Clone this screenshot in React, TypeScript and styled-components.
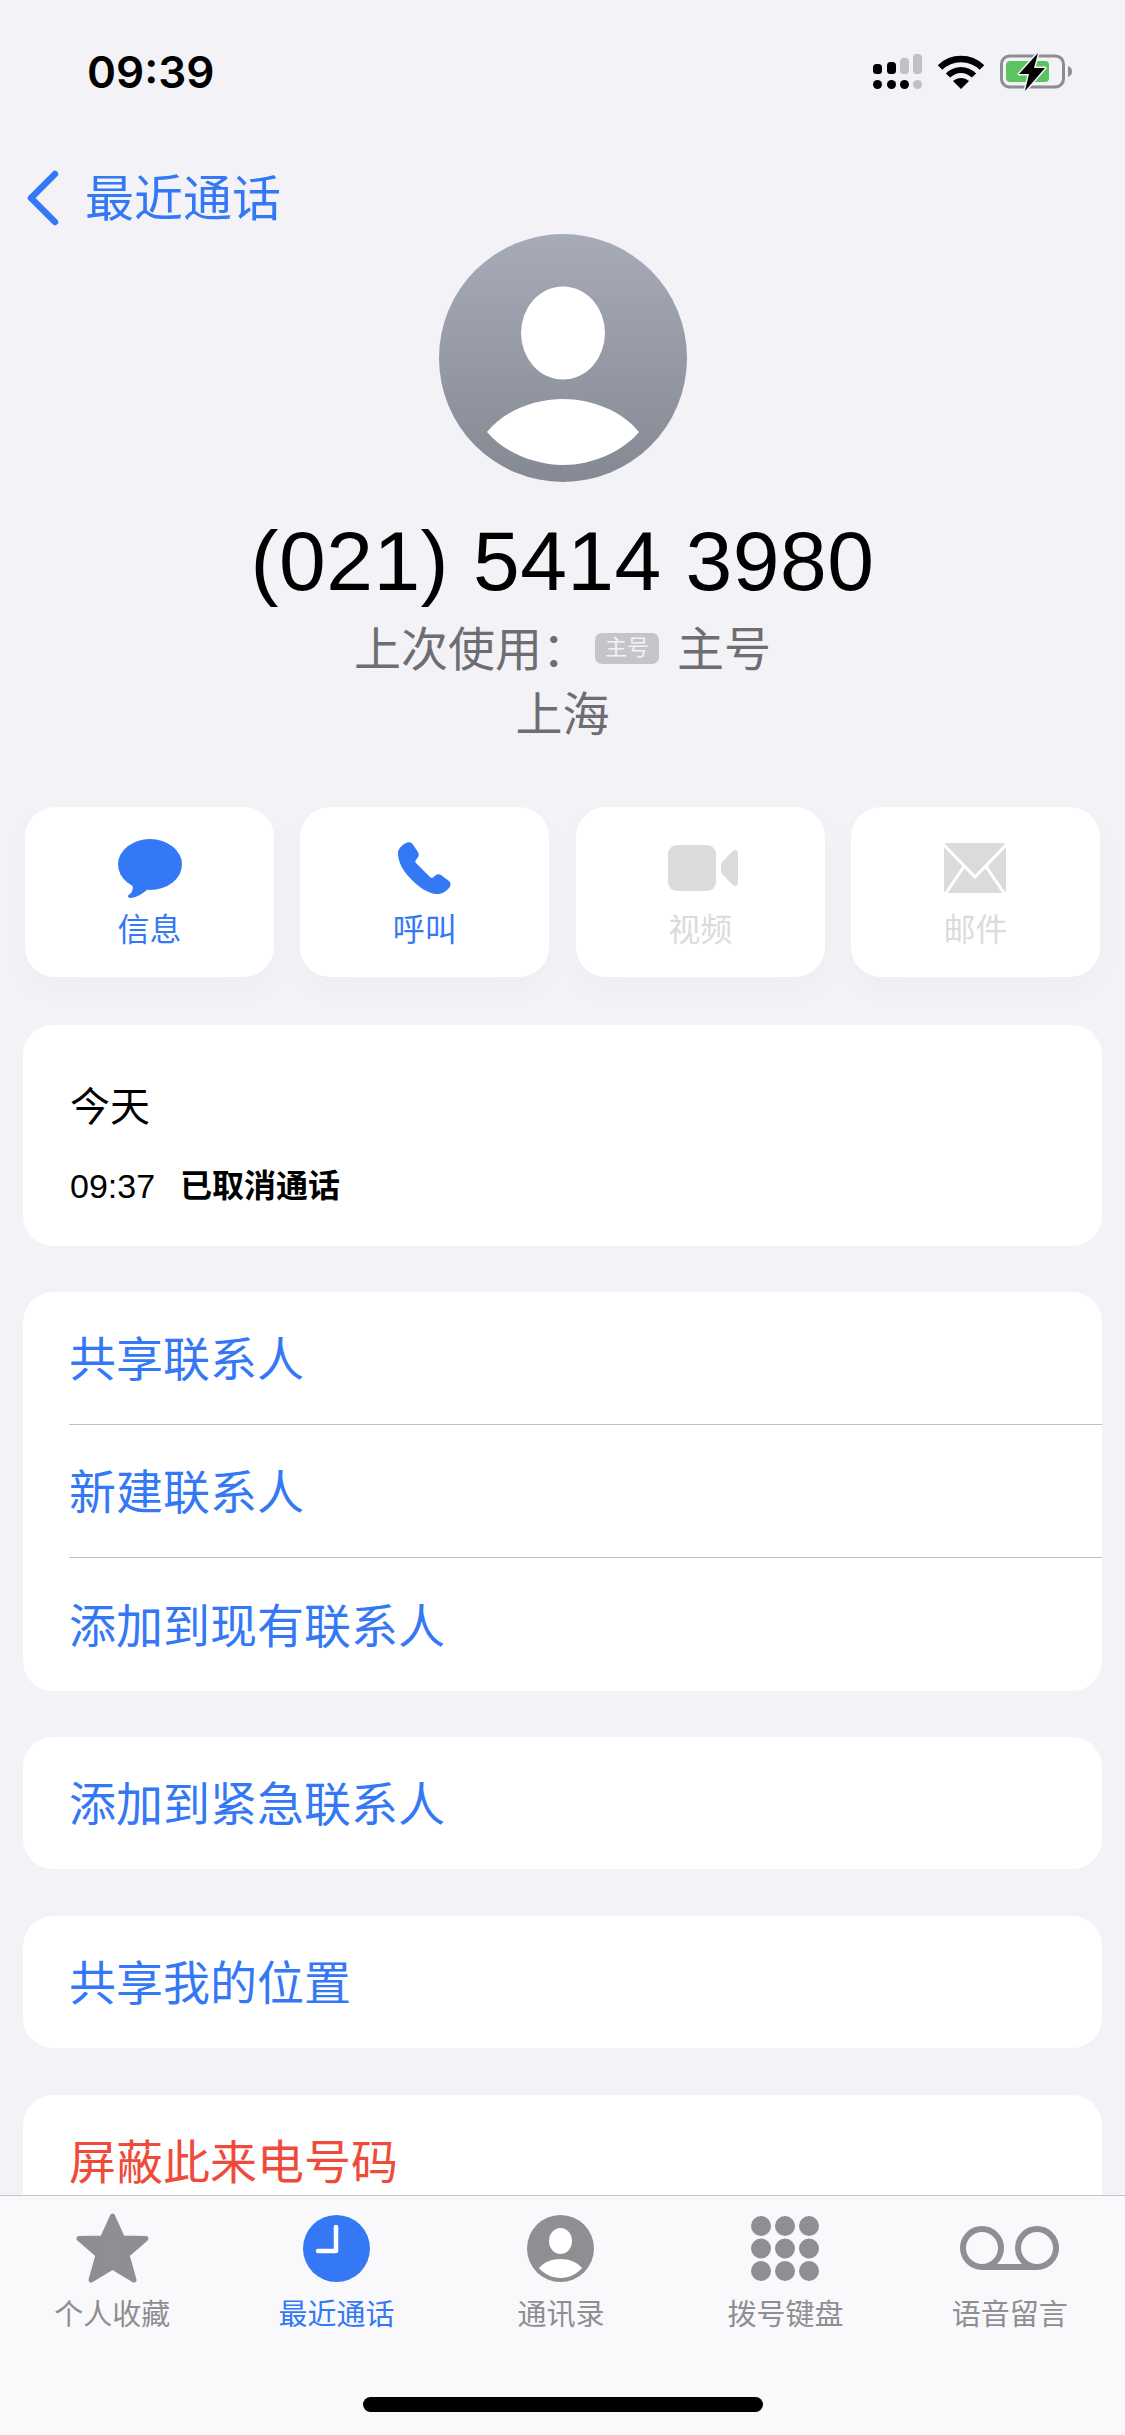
import React from "react";
import styled, { createGlobalStyle } from "styled-components";

const CJK = `"Liberation Sans", "Noto Sans CJK SC", sans-serif`;
const BLUE = "#3478f6";
const GREY = "#8e8e93";
const DISABLED = "#dbdbdd";

const GlobalStyle = createGlobalStyle`
  html, body {
    margin: 0;
    padding: 0;
    background: #f2f2f7;
  }
  * {
    box-sizing: border-box;
  }
`;

const Screen = styled.div`
  position: relative;
  width: 1125px;
  height: 2435px;
  overflow: hidden;
  background: #f2f2f7;
  font-family: ${CJK};
  color: #000;
`;

const StatusBar = styled.div`
  height: 143px;
  padding: 0 53px 0 87px;
  display: flex;
  align-items: center;
  justify-content: space-between;
`;

const Clock = styled.span`
  font-family: Inter, "Liberation Sans", sans-serif;
  font-size: 44px;
  font-weight: 600;
`;

const StatusIcons = styled.div`
  display: flex;
  align-items: center;
  gap: 16px;
`;

const Nav = styled.div`
  height: 91px;
  padding: 27px 0 0 27px;
  display: flex;
  align-items: flex-start;
  gap: 26px;
  color: ${BLUE};
  font-size: 49px;
  line-height: 59px;
`;

const Hero = styled.div`
  display: flex;
  flex-direction: column;
  align-items: center;
`;

const PhoneNumber = styled.div`
  margin-top: 31px;
  font-size: 84px;
  letter-spacing: 0.5px;
  line-height: 96px;
`;

const SubLine = styled.div`
  display: flex;
  align-items: center;
  height: 65px;
  padding-bottom: 7px;
  font-size: 47px;
  color: #6d6d72;
`;

const FirstSubLine = styled(SubLine)`
  margin-top: 7px;
`;

const Tag = styled.span`
  width: 64px;
  height: 31px;
  margin: 7px 18px 0 6px;
  border-radius: 7px;
  background: #c5c5c9;
  color: #f2f2f7;
  font-size: 22px;
  line-height: 30px;
  text-align: center;
`;

const Actions = styled.div`
  margin-top: 61px;
  padding: 0 25px;
  display: grid;
  grid-template-columns: repeat(4, 249px);
  justify-content: space-between;
`;

const Action = styled.div<{ $disabled?: boolean }>`
  height: 170px;
  border-radius: 30px;
  background: #fff;
  box-shadow: 0 12px 30px rgba(60, 60, 90, 0.025);
  padding-top: 30px;
  display: flex;
  flex-direction: column;
  align-items: center;
  color: ${({ $disabled }) => ($disabled ? DISABLED : BLUE)};
  font-size: 32px;
  line-height: 44px;
`;

const ActionIcon = styled.div`
  height: 62px;
  margin-bottom: 9px;
  display: flex;
  align-items: center;
  justify-content: center;
`;

const Card = styled.div<{ $gap?: number }>`
  margin: ${({ $gap }) => $gap ?? 46}px 23px 0;
  border-radius: 30px;
  background: #fff;
  overflow: hidden;
`;

const CallCard = styled(Card)`
  height: 221px;
  padding: 52px 47px 0;
`;

const CallDay = styled.div`
  font-size: 40px;
  line-height: 60px;
`;

const CallRow = styled.div`
  margin-top: 27px;
  display: flex;
  gap: 25px;
  font-size: 32px;
  line-height: 44px;
`;

const CallTime = styled.span`
  font-size: 34px;
`;

const CallStatus = styled.span`
  font-weight: 700;
`;

const Row = styled.div<{ $danger?: boolean }>`
  padding-left: 46px;
  color: ${({ $danger }) => ($danger ? "#f04b3a" : BLUE)};
  font-size: 47px;
`;

const RowLabel = styled.div`
  height: 133px;
  padding-bottom: 5px;
  display: flex;
  align-items: center;
  border-bottom: 1px solid #bfbfc2;

  ${Row}:last-child & {
    border-bottom: 0;
  }

  ${Row}:only-child & {
    height: 132px;
  }
`;

const TabBar = styled.div`
  position: absolute;
  left: 0;
  right: 0;
  top: 2195px;
  bottom: 0;
  border-top: 1.5px solid #c6c6c9;
  background: #f9f9fb;
  padding: 15px 3px 0 0;
  display: grid;
  grid-template-columns: repeat(5, 1fr);
  align-items: start;
`;

const Tab = styled.div<{ $active?: boolean }>`
  display: flex;
  flex-direction: column;
  align-items: center;
  color: ${({ $active }) => ($active ? BLUE : GREY)};
  font-size: 29px;
  line-height: 40px;
`;

const TabIcon = styled.div`
  height: 74px;
  margin-bottom: 10px;
  display: flex;
  align-items: center;
  justify-content: center;
`;

const HomeIndicator = styled.div`
  position: absolute;
  left: 363px;
  bottom: 23px;
  width: 400px;
  height: 15px;
  border-radius: 8px;
  background: #000;
`;

const SignalIcon = () => (
  <svg width="49" height="35" viewBox="0 0 49 35">
    <rect x="0" y="10" width="9" height="10" rx="3.5" fill="#000" />
    <rect x="14" y="8" width="9" height="12" rx="3.5" fill="#000" />
    <rect x="27" y="4" width="9" height="16" rx="3.5" fill="#c1c1c5" />
    <rect x="40" y="0" width="9" height="20" rx="3.5" fill="#c1c1c5" />
    <circle cx="4.5" cy="30.5" r="4.5" fill="#000" />
    <circle cx="18.5" cy="30.5" r="4.5" fill="#000" />
    <circle cx="31.5" cy="30.5" r="4.5" fill="#000" />
    <circle cx="44.5" cy="30.5" r="4.5" fill="#c1c1c5" />
  </svg>
);

const WifiIcon = () => (
  <svg width="46" height="34" viewBox="0 0 46 34" fill="none" stroke="#000">
    <path d="M2 12.5C13.5 1 32.5 1 44 12.5" strokeWidth="6.5" />
    <path d="M10 20.5C17.5 13 28.5 13 36 20.5" strokeWidth="6" />
    <path d="M15 26C20 22 26 22 31 26L23 34Z" fill="#000" stroke="none" />
  </svg>
);

const BatteryIcon = () => (
  <svg width="72" height="38" viewBox="0 0 72 38">
    <rect x="1.5" y="3" width="62" height="31" rx="8" fill="none" stroke="#8e8e92" strokeWidth="3" />
    <rect x="6" y="8" width="43" height="21" rx="4" fill="#5ac560" />
    <path d="M68 13C71 14 72 16 72 18.5C72 21 71 23 68 24Z" fill="#8e8e92" />
    <path
      d="M38 0L19 21H29L25 38L45 15H34Z"
      fill="#000"
      stroke="#f2f2f7"
      strokeWidth="3"
      paintOrder="stroke"
      strokeLinejoin="round"
    />
  </svg>
);

const BackChevron = () => (
  <svg width="32" height="56" viewBox="0 0 32 56" fill="none" stroke={BLUE} strokeWidth="6.5" strokeLinecap="round" strokeLinejoin="round">
    <path d="M28 4L4 28L28 52" />
  </svg>
);

const Avatar = () => (
  <svg width="248" height="248" viewBox="0 0 248 248">
    <defs>
      <linearGradient id="avatarFill" x1="0" y1="0" x2="0" y2="1">
        <stop offset="0" stopColor="#a7abb7" />
        <stop offset="1" stopColor="#858994" />
      </linearGradient>
    </defs>
    <circle cx="124" cy="124" r="124" fill="url(#avatarFill)" />
    <ellipse cx="124" cy="99" rx="42" ry="46.5" fill="#fff" />
    <path d="M48 198C65 177 95 165 124 165C153 165 183 177 200 198C183 218 153 231 124 231C95 231 65 218 48 198Z" fill="#fff" />
  </svg>
);

const MessageIcon = () => (
  <svg width="64" height="59" viewBox="0 0 64 59" fill={BLUE}>
    <ellipse cx="32" cy="25.5" rx="32" ry="25.5" />
    <path d="M14 44C16 50 14 54 10.5 56C9 58 11 59 13 59C19 58 24 55 29 51Z" />
  </svg>
);

const PhoneIcon = () => (
  <svg width="53" height="52" viewBox="0 0 53 52" fill={BLUE}>
    <path d="M8 1C10 -0.5 13 0 14.5 2L20 10C21 12 21 14 20 15L18 18C17 19 17 20 18 21L32 35C33 36 34 36 35 35.5L38 33C39 32 41 32 43 33L51 39C53 41 53 44 51 46C47 50 44 52 39 52C31 52 20 45 12 36C4 28 0 19 0 11C0 7 4 3 8 1Z" />
  </svg>
);

const VideoIcon = () => (
  <svg width="76" height="46" viewBox="-6 0 76 46" fill={DISABLED}>
    <rect x="0" y="0" width="48" height="46" rx="9" />
    <path d="M54 17L65 6C67 4 70 5 70 8V38C70 41 67 42 65 40L54 29C53 28 53 27 53 26V20C53 19 53 18 54 17Z" />
  </svg>
);

const MailIcon = () => (
  <svg width="62" height="50" viewBox="0 0 62 50">
    <rect x="0" y="0" width="62" height="50" rx="3" fill={DISABLED} />
    <path d="M0 2L31 34L62 2M2 50L21 22M60 50L41 22" fill="none" stroke="#fff" strokeWidth="3" />
  </svg>
);

const StarIcon = () => (
  <svg width="73" height="70" viewBox="0 0 73 70" fill={GREY} stroke={GREY} strokeWidth="5" strokeLinejoin="round">
    <path d="M36.5 3L46.5 25L70 25.5L51 42L58 67L36.5 54L15 67L22 42L3 25.5L26.5 25Z" />
  </svg>
);

const ClockIcon = () => (
  <svg width="67" height="67" viewBox="0 0 67 67">
    <circle cx="33.5" cy="33.5" r="33.5" fill={BLUE} />
    <path d="M33 12V36H15" fill="none" stroke="#fff" strokeWidth="4.5" strokeLinecap="round" strokeLinejoin="round" />
  </svg>
);

const ContactIcon = () => (
  <svg width="67" height="67" viewBox="0 0 67 67">
    <circle cx="33.5" cy="33.5" r="33.5" fill={GREY} />
    <ellipse cx="33.5" cy="26" rx="11.5" ry="13" fill="#fff" />
    <path d="M12 53C17 47 25 44 33.5 44C42 44 50 47 55 53C50 59 42 63 33.5 63C25 63 17 59 12 53Z" fill="#fff" />
  </svg>
);

const KeypadIcon = () => (
  <svg width="68" height="65" viewBox="0 0 68 65" fill={GREY}>
    {[10, 32.5, 55].map((cy) =>
      [10, 34, 58].map((cx) => <circle key={`${cx}-${cy}`} cx={cx} cy={cy} r="10" />)
    )}
  </svg>
);

const VoicemailIcon = () => (
  <svg width="99" height="44" viewBox="0 0 99 44" fill="none" stroke={GREY} strokeWidth="6">
    <circle cx="22" cy="22" r="19" />
    <circle cx="77" cy="22" r="19" />
    <path d="M22 41H77" />
  </svg>
);

const actions = [
  { label: "信息", icon: <MessageIcon /> },
  { label: "呼叫", icon: <PhoneIcon /> },
  { label: "视频", icon: <VideoIcon />, disabled: true },
  { label: "邮件", icon: <MailIcon />, disabled: true },
];

const tabs = [
  { label: "个人收藏", icon: <StarIcon /> },
  { label: "最近通话", icon: <ClockIcon />, active: true },
  { label: "通讯录", icon: <ContactIcon /> },
  { label: "拨号键盘", icon: <KeypadIcon /> },
  { label: "语音留言", icon: <VoicemailIcon /> },
];

function App() {
  return (
    <Screen>
      <GlobalStyle />
      <StatusBar>
        <Clock>09:39</Clock>
        <StatusIcons>
          <SignalIcon />
          <WifiIcon />
          <BatteryIcon />
        </StatusIcons>
      </StatusBar>
      <Nav>
        <BackChevron />
        <span>最近通话</span>
      </Nav>
      <Hero>
        <Avatar />
        <PhoneNumber>(021) 5414 3980</PhoneNumber>
        <FirstSubLine>
          上次使用：
          <Tag>主号</Tag>
          主号
        </FirstSubLine>
        <SubLine>上海</SubLine>
      </Hero>
      <Actions>
        {actions.map((action) => (
          <Action key={action.label} $disabled={action.disabled}>
            <ActionIcon>{action.icon}</ActionIcon>
            {action.label}
          </Action>
        ))}
      </Actions>
      <CallCard $gap={48}>
        <CallDay>今天</CallDay>
        <CallRow>
          <CallTime>09:37</CallTime>
          <CallStatus>已取消通话</CallStatus>
        </CallRow>
      </CallCard>
      <Card>
        <Row><RowLabel>共享联系人</RowLabel></Row>
        <Row><RowLabel>新建联系人</RowLabel></Row>
        <Row><RowLabel>添加到现有联系人</RowLabel></Row>
      </Card>
      <Card>
        <Row><RowLabel>添加到紧急联系人</RowLabel></Row>
      </Card>
      <Card $gap={47}>
        <Row><RowLabel>共享我的位置</RowLabel></Row>
      </Card>
      <Card $gap={47}>
        <Row $danger><RowLabel>屏蔽此来电号码</RowLabel></Row>
      </Card>
      <TabBar>
        {tabs.map((tab) => (
          <Tab key={tab.label} $active={tab.active}>
            <TabIcon>{tab.icon}</TabIcon>
            {tab.label}
          </Tab>
        ))}
      </TabBar>
      <HomeIndicator />
    </Screen>
  );
}

export default App;
